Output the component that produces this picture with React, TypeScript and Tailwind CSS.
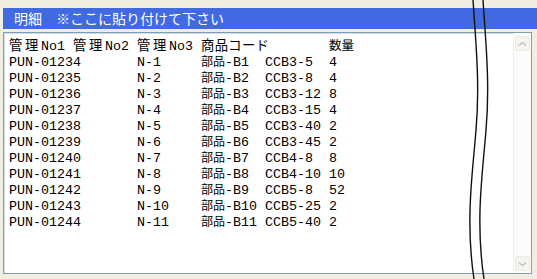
const mono = { fontFamily: "'Liberation Mono', 'Noto Sans CJK JP', monospace" }
const jp = { fontFamily: "'Noto Sans CJK JP', sans-serif" }

type Row = [string, string, string, string, string]

const rows: Row[] = [
  ['PUN-01234', 'N-1', 'B1', 'CCB3-5', '4'],
  ['PUN-01235', 'N-2', 'B2', 'CCB3-8', '4'],
  ['PUN-01236', 'N-3', 'B3', 'CCB3-12', '8'],
  ['PUN-01237', 'N-4', 'B4', 'CCB3-15', '4'],
  ['PUN-01238', 'N-5', 'B5', 'CCB3-40', '2'],
  ['PUN-01239', 'N-6', 'B6', 'CCB3-45', '2'],
  ['PUN-01240', 'N-7', 'B7', 'CCB4-8', '8'],
  ['PUN-01241', 'N-8', 'B8', 'CCB4-10', '10'],
  ['PUN-01242', 'N-9', 'B9', 'CCB5-8', '52'],
  ['PUN-01243', 'N-10', 'B10', 'CCB5-25', '2'],
  ['PUN-01244', 'N-11', 'B11', 'CCB5-40', '2'],
]

function ScrollButton({ down }: { down?: boolean }) {
  return (
    <div className="w-[15px] h-[15px] ml-[1px] rounded-[2px] border border-[#ECEAE2] bg-[#F4F3EE] flex items-center justify-center">
      <svg width="9" height="6" viewBox="0 0 9 6">
        <path
          d={down ? 'M1 1.5 L4.5 4.5 L8 1.5' : 'M1 4.5 L4.5 1.5 L8 4.5'}
          fill="none"
          stroke="#C4C3BC"
          strokeWidth="1.6"
        />
      </svg>
    </div>
  )
}

export default function App() {
  return (
    <div className="relative w-[537px] h-[279px] overflow-hidden bg-[#EFEEE0] pt-[8px] pl-[3px]">
      {/* ── Title bar ── */}
      <div
        className="h-[21px] bg-[#4169E1] text-white text-[14px] leading-[21px] pl-[11px]"
        style={jp}
      >
        明細　※ここに貼り付けて下さい
      </div>

      {/* ── Text area ── */}
      <div className="mt-[3px] w-[529px] h-[242px] border border-[#7F9DB9] bg-white flex">
        <div
          className="flex-1 pt-[5px] pl-[4px] text-[13.33px] leading-[15px] text-black border-l border-t border-[#D3DEEC]"
          style={mono}
        >
          <div className="grid grid-cols-[repeat(6,64px)]">
            <div className="whitespace-nowrap">
              <span className="tracking-[2.67px]">管理</span>No1
            </div>
            <div className="whitespace-nowrap">
              <span className="tracking-[2.67px]">管理</span>No2
            </div>
            <div className="whitespace-nowrap">
              <span className="tracking-[2.67px]">管理</span>No3
            </div>
            <div className="whitespace-nowrap">
              <span className="tracking-[0.3px]">商品コード</span>
            </div>
            <div />
            <div className="whitespace-nowrap">
              <span className="text-[12.5px]">数量</span>
            </div>
            {rows.map((r) => (
              <div key={r[0]} className="contents">
                <div className="col-span-2 whitespace-nowrap">{r[0]}</div>
                <div className="whitespace-nowrap">{r[1]}</div>
                <div className="whitespace-nowrap">
                  <span className="text-[12px]">部品</span>-{r[2]}
                </div>
                <div className="whitespace-nowrap">{r[3]}</div>
                <div className="whitespace-nowrap">{r[4]}</div>
              </div>
            ))}
          </div>
        </div>
        <div className="w-[18px] bg-[#FCFCFA] border-l border-[#F0EFE8] flex flex-col justify-between pt-[3px] pb-[2px]">
          <ScrollButton />
          <ScrollButton down />
        </div>
      </div>

      {/* ── break marks ── */}
      <svg
        className="absolute inset-0 pointer-events-none"
        width="537"
        height="279"
        viewBox="0 0 537 279"
      >
        <path
          d="M473 0 C476 45, 480 85, 476 130 C473 170, 465 220, 474 279"
          fill="none"
          stroke="#111"
          strokeWidth="1.4"
        />
        <path
          d="M483 0 C486 45, 490 85, 486 130 C483 170, 475 220, 484 279"
          fill="none"
          stroke="#111"
          strokeWidth="1.4"
        />
      </svg>
    </div>
  )
}
